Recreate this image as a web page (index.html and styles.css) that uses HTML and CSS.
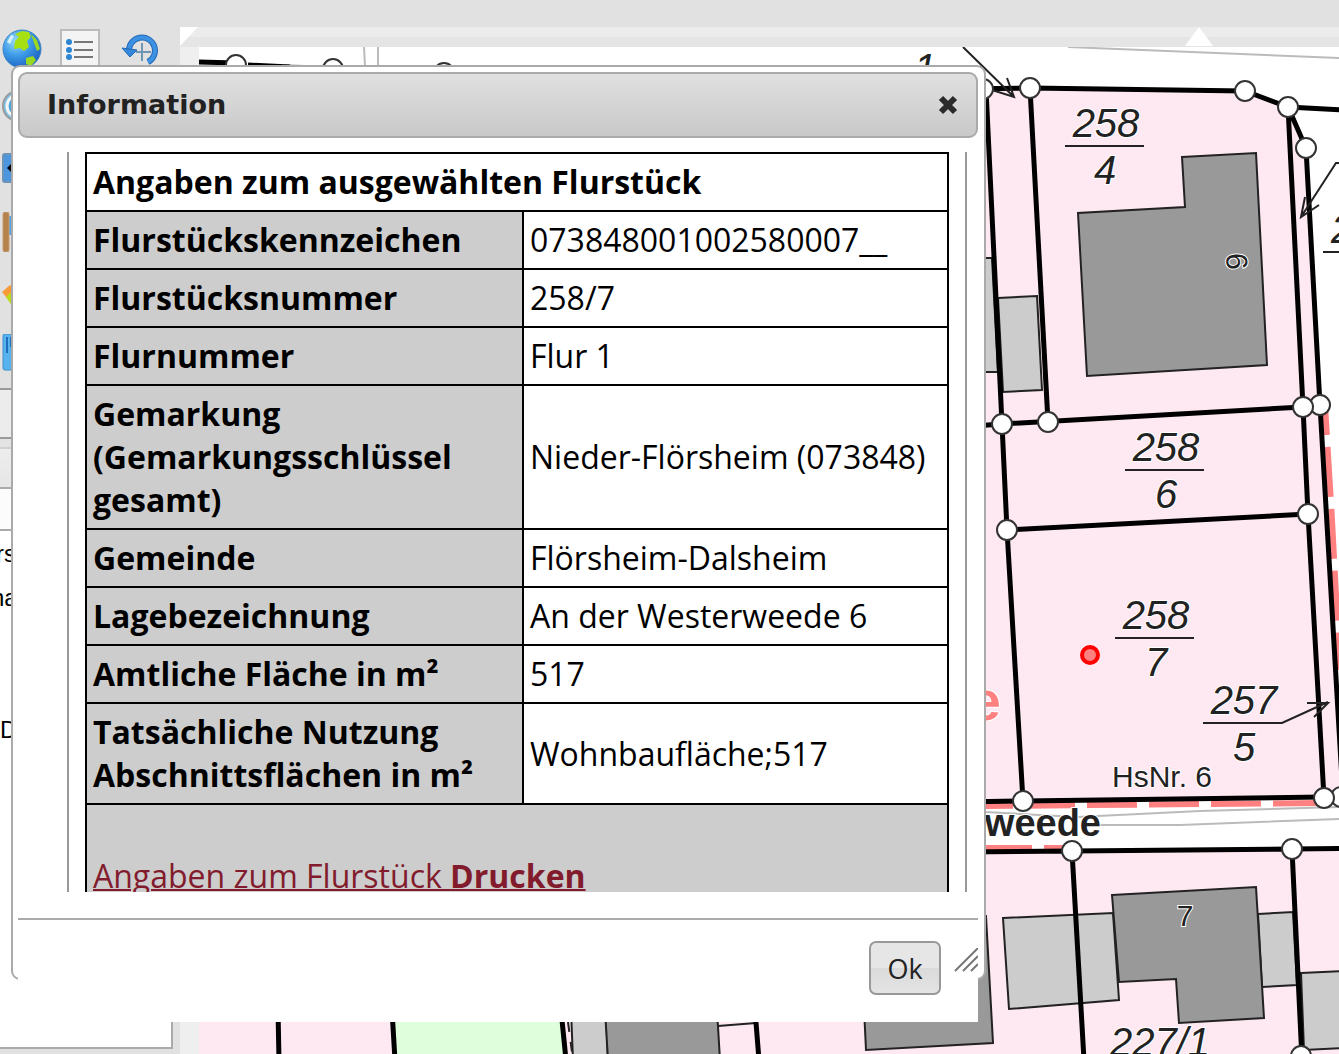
FILE: index.html
```html
<!DOCTYPE html>
<html lang="de">
<head>
<meta charset="utf-8">
<meta name="viewport" content="width=device-width, initial-scale=1">
<title>Information</title>
<link rel="stylesheet" href="styles.css">
</head>
<body>
<div class="app">
  <aside class="sidebar">
    <div class="toolbar">
      <div class="tool-row">
        <button class="tool" type="button" aria-label="Gesamtansicht">
          <svg width="40" height="40" viewBox="0 0 40 40">
            <defs><radialGradient id="sea" cx="35%" cy="30%" r="75%"><stop offset="0" stop-color="#9fdcf8"/><stop offset=".5" stop-color="#3d9be8"/><stop offset="1" stop-color="#1c5fc0"/></radialGradient></defs>
            <circle cx="20" cy="20" r="19" fill="url(#sea)" stroke="#3c86c4"/>
            <path d="M13 5 20 2 27 3 29 8 25 12 27 18 22 22 18 19 12 20 13 12 17 8Z" fill="#a6e010"/>
            <path d="M29 5 35 11 38 20 35 22 32 14ZM24 29 31 27 34 31 29 37 24 35Z" fill="#98d820"/>
            <path d="M5 13 9 6 12 7 8 15Z" fill="#d4f1fb"/>
          </svg>
        </button>
        <button class="tool framed" type="button" aria-label="Legende">
          <svg width="36" height="36" viewBox="0 0 36 36">
            <path d="M12 11H31M12 19H31M12 26H31" stroke="#777" stroke-width="2"/>
            <circle cx="7" cy="11" r="3" fill="#2d86d4"/><circle cx="7" cy="19" r="3" fill="#2d86d4"/><circle cx="7" cy="26" r="3" fill="#2d86d4"/>
          </svg>
        </button>
        <button class="tool" type="button" aria-label="Vorherige Ansicht">
          <svg width="40" height="40" viewBox="0 0 40 40">
            <path d="M11 22A13 13 0 1 1 30 33" fill="none" stroke="#2368b4" stroke-width="6"/>
            <path d="M11 22A13 13 0 1 1 30 33" fill="none" stroke="#3d92e4" stroke-width="4"/>
            <path d="M4 19 19 21 12 28Z" fill="#3488dc" stroke="#2368b4"/>
            <path d="M24 14V32M18 23H33" stroke="#6d96b4" stroke-width="2"/>
          </svg>
        </button>
      </div>
      <button class="tool" type="button" aria-label="Lupe">
        <svg width="40" height="40" viewBox="0 0 40 40"><circle cx="16" cy="16" r="15" fill="#7cc4ee" stroke="#999" stroke-width="2"/><circle cx="16" cy="16" r="11" fill="#4ea7de" stroke="#f4f4f4" stroke-width="3"/></svg>
      </button>
      <button class="tool" type="button" aria-label="Verschieben">
        <svg width="40" height="40" viewBox="0 0 40 40"><rect x="1" y="3" width="32" height="28" rx="2" fill="#4b96dc" stroke="#6d93b6" stroke-width="2"/><path d="M5 17 12 10V24Z"/></svg>
      </button>
      <button class="tool" type="button" aria-label="Markierung">
        <svg width="40" height="40" viewBox="0 0 40 40"><rect x="7" y="4" width="24" height="19" fill="#4fa4ea"/><rect x="1" y="0" width="6" height="40" rx="2" fill="#b5824c" stroke="#c59b70"/></svg>
      </button>
      <button class="tool" type="button" aria-label="Zeichnen">
        <svg width="40" height="40" viewBox="0 0 40 40"><path d="M0 19 8 12 20 24 12 34Z" fill="#f79a3a"/><path d="M4 24 8 20 16 28 11 34Z" fill="#b8dc18"/></svg>
      </button>
      <button class="tool" type="button" aria-label="Messen">
        <svg width="40" height="40" viewBox="0 0 40 40"><rect x="1" y="0" width="34" height="36" rx="2" fill="#58b2ee" stroke="#3c8ccc"/><path d="M5 3V19M9 3V13" stroke="#1d6fbc" stroke-width="2"/></svg>
      </button>
    </div>
    <div class="bar"></div>
    <div class="tabs"></div>
    <div class="panel-head"></div>
    <div class="panel">
      <p>rs</p>
      <p class="panel-item">na</p>
      <p class="panel-last">D</p>
    </div>
  </aside>
  <main class="map-area">
    <div class="ruler">
      <svg width="100%" height="20"><path d="M0 0H18L0 19ZM1005 19 1019 0 1033 19Z" fill="#fff"/></svg>
    </div>
    <svg class="map" width="100%" height="100%" role="img" aria-label="Flurkarte">
      <g transform="translate(-199 -47)">
        <g fill="#fee9f2">
          <path d="M960 90 1030 88 1245 91 1288 107 1306 148 1320 405 1343 797 1324 798 960 801Z"/>
          <path d="M199 852H960L1292 849 1600 846V1600H199Z"/>
        </g>
        <path d="M392 1010H560L566 1060H396Z" fill="#dffedb"/>

        <g class="thin">
          <path d="M1068 47 1339 58M985 812 1077 817 1200 811 1339 807M1100 825H1180L1339 819M364 47 365 66M378 47V66M285 65 325 67"/>
        </g>

        <g class="house-light">
          <path d="M970 258H992L998 372H970ZM998 298 1037 296 1042 390 1003 392ZM1003 918 1113 913 1119 1000 1009 1009ZM1258 914 1293 912 1297 985 1262 987ZM1301 973 1345 971V1048L1304 1050ZM571 1010H606L608 1060H573Z"/>
        </g>
        <g class="house">
          <path d="M1182 157 1256 153 1267 365 1087 376 1078 213 1185 207ZM1112 895 1256 887 1264 1018 1179 1023 1176 979 1119 982ZM860 925 986 916 993 1043 866 1050ZM605 1010H717L720 1060H608Z"/>
          <path d="M718 1026 756 1023" />
        </g>

        <g class="boundary">
          <path d="M985 806 1320 803" stroke-dasharray="50 12" stroke-dashoffset="22"/>
          <path d="M985 848H1066" stroke-dasharray="47 12"/>
          <path d="M1325 405 1332 520 1340 670" stroke-dasharray="50 12" stroke-dashoffset="20"/>
        </g>
        <text class="street-red" x="1001" y="720">e</text>

        <g class="parcel">
          <path d="M960 89 1030 88 1245 91 1288 107 1400 113M1288 107 1306 148 1320 405 1343 797M1288 107 1303 407 1308 514 1324 798"/>
          <path d="M986 89 1002 424 1007 530 1023 801M1030 88 1048 422M960 427 1002 424 1303 407 1320 405M1007 530 1308 514M960 802 1023 801 1324 797 1400 797"/>
          <path d="M960 852 1072 851 1292 849 1400 848M1072 851 1084 1060M1292 849 1302 1060M278 1010 279 1060M392 1010 395 1060M561 1010 566 1060M755 1010 759 1060M199 62 236 63M248 65 290 67"/>
        </g>

        <g class="street"><text x="1101" y="836">weede</text></g>

        <g class="pointer">
          <path d="M963 47 1014 97M1007 78 1014 97 992 90M1400 163H1336L1301 217M1305 197 1301 217 1319 205M1203 723H1282L1328 702M1307 703H1328L1314 717"/>
          <path d="M1065 146H1144M1125 470H1204M1115 638H1194M1323 252H1400"/>
          <path d="M568 1022 573 1060" stroke-dasharray="10 10"/>
        </g>

        <g class="nodes">
          <circle cx="983" cy="89" r="10"/><circle cx="1030" cy="88" r="10"/><circle cx="1245" cy="91" r="10"/><circle cx="1288" cy="107" r="10"/><circle cx="1306" cy="148" r="10"/>
          <circle cx="1320" cy="405" r="10"/><circle cx="1303" cy="407" r="10"/><circle cx="1002" cy="424" r="10"/><circle cx="1048" cy="422" r="10"/>
          <circle cx="1308" cy="514" r="10"/><circle cx="1007" cy="530" r="10"/><circle cx="1023" cy="801" r="10"/><circle cx="1341" cy="797" r="10"/><circle cx="1324" cy="798" r="10"/>
          <circle cx="1072" cy="851" r="10"/><circle cx="1292" cy="849" r="10"/><circle cx="1301" cy="1056" r="10"/>
          <circle cx="236" cy="65" r="10"/><circle cx="333" cy="69" r="10"/><circle cx="444" cy="73" r="10"/>
        </g>

        <g class="number">
          <text x="1106" y="137">258</text><text x="1105" y="184">4</text>
          <text x="1166" y="461">258</text><text x="1166" y="508">6</text>
          <text x="1156" y="629">258</text><text x="1156" y="676">7</text>
          <text x="1244" y="714">257</text><text x="1244" y="761">5</text>
          <text x="1160" y="1056">227/1</text><text x="925" y="82">1</text><text x="1342" y="243">2</text>
        </g>
        <g class="house-no">
          <text x="1162" y="787">HsNr. 6</text><text x="1185" y="926">7</text>
          <text transform="translate(1247 261) rotate(-93)">9</text>
        </g>
        <circle cx="1090" cy="655" r="8" fill="#ff8080" stroke="#f00" stroke-width="4"/>
      </g>
    </svg>
  </main>
</div>

<section class="dialog" role="dialog" aria-labelledby="dialog-title">
  <header class="titlebar">
    <h1 id="dialog-title">Information</h1>
    <button class="close" type="button" aria-label="Schließen">
      <svg width="22" height="22" viewBox="0 0 22 22"><path d="M4 4 18 18M18 4 4 18" stroke="#2b2b2b" stroke-width="6"/></svg>
    </button>
  </header>
  <div class="content">
    <table>
      <colgroup><col class="col-label"><col></colgroup>
      <thead><tr><th class="caption" colspan="2" scope="colgroup">Angaben zum ausgewählten Flurstück</th></tr></thead>
      <tbody>
        <tr><th scope="row">Flurstückskennzeichen</th><td>073848001002580007__</td></tr>
        <tr><th scope="row">Flurstücksnummer</th><td>258/7</td></tr>
        <tr><th scope="row">Flurnummer</th><td>Flur 1</td></tr>
        <tr><th scope="row">Gemarkung (Gemarkungsschlüssel gesamt)</th><td>Nieder-Flörsheim (073848)</td></tr>
        <tr><th scope="row">Gemeinde</th><td>Flörsheim-Dalsheim</td></tr>
        <tr><th scope="row">Lagebezeichnung</th><td>An der Westerweede 6</td></tr>
        <tr><th scope="row">Amtliche Fläche in m²</th><td>517</td></tr>
        <tr><th scope="row">Tatsächliche Nutzung Abschnittsflächen in m²</th><td>Wohnbaufläche;517</td></tr>
        <tr><td class="print" colspan="2"><a href="#drucken">Angaben zum Flurstück <b>Drucken</b></a></td></tr>
      </tbody>
    </table>
  </div>
  <footer class="buttons">
    <button class="ok" type="button">Ok</button>
  </footer>
  <svg class="grip" width="24" height="24" viewBox="0 0 24 24"><path d="M1 23 24 0M9 23 24 8M17 23 24 16" stroke="#777" stroke-width="2"/></svg>
</section>
</body>
</html>
```
FILE: styles.css
```css
* {
  box-sizing: border-box;
}

body {
  margin: 0;
  height: 100vh;
  overflow: hidden;
  background: #e1e1e1;
  font-family: "Open Sans", sans-serif;
}

button {
  margin: 0;
  padding: 0;
  border: 0;
  background: none;
  font: inherit;
}

button svg {
  display: block;
}

.app {
  display: flex;
  height: 100%;
  padding-top: 27px;
}

/* Sidebar */
.sidebar {
  display: flex;
  flex: 0 0 180px;
  flex-direction: column;
  padding-right: 7px;
}

.toolbar {
  display: flex;
  flex-direction: column;
  align-items: flex-start;
  gap: 21px;
  height: 361px;
  padding: 2px;
}

.tool-row {
  display: flex;
  gap: 18px;
}

.tool {
  flex: none;
  width: 40px;
  height: 40px;
}

.framed {
  border: 2px solid #bbb;
  background: #f4f4f4;
}

.bar {
  height: 51px;
  border: solid #999;
  border-width: 2px 0;
  background: #ececec;
}

.tabs {
  height: 50px;
  border-bottom: 2px solid #aaa;
  background: linear-gradient(#e3e3e3 8px, #d0d0d0 8px, #d0d0d0 10px, #ededed 10px, #e6e6e6);
}

.panel-head {
  height: 42px;
  border: solid #aaa;
  border-width: 0 2px 2px 0;
  background: #fcfcfc;
}

.panel {
  flex: 1;
  margin-bottom: 5px;
  padding-top: 1px;
  border: solid #aaa;
  border-width: 0 2px 2px 0;
  background: #fff;
  font-family: "Liberation Sans", sans-serif;
  font-size: 24px;
  line-height: 44px;
  text-indent: -4px;
}

.panel p {
  margin: 0;
}

.panel .panel-item {
  text-indent: -9px;
}

.panel .panel-last {
  margin-top: 88px;
  text-indent: 0;
}

/* Map */
.map-area {
  display: flex;
  flex: 1;
  flex-direction: column;
  min-width: 0;
  background: #efefef;
}

.ruler {
  flex: none;
  height: 20px;
  background: linear-gradient(#ececec 50%, #e5e5e5 50%);
}

.ruler svg {
  display: block;
}

.map {
  flex: 1;
  width: auto;
  min-height: 0;
  margin-left: 19px;
  background: #fff;
  font-family: "Liberation Sans", sans-serif;
}

.thin {
  fill: none;
  stroke: #bbb;
  stroke-width: 2;
}

.house-light {
  fill: #ccc;
  stroke: #222;
  stroke-width: 2;
}

.house {
  fill: #999;
  stroke: #222;
  stroke-width: 2;
}

.boundary {
  fill: none;
  stroke: #ff8080;
  stroke-width: 6;
}

.parcel {
  fill: none;
  stroke: #000;
  stroke-width: 5;
}

.pointer {
  fill: none;
  stroke: #222;
  stroke-width: 2;
}

.nodes {
  fill: #fff;
  stroke: #333;
  stroke-width: 2;
}

.map text {
  fill: #222;
  stroke: #fff;
  stroke-width: 2;
  paint-order: stroke;
  text-anchor: middle;
}

.number {
  font-size: 40px;
  font-style: italic;
}

.house-no {
  font-size: 30px;
}

.street {
  font-size: 38px;
  font-weight: bold;
}

.map .street text {
  text-anchor: end;
}

.map .street-red {
  fill: #ff8080;
  font-size: 56px;
  font-weight: bold;
  text-anchor: end;
}

/* Dialog */
.dialog {
  position: absolute;
  top: 65px;
  left: 11px;
  width: 975px;
  padding: 5px 6px 5px 5px;
  border: 2px solid #aaa;
  border-radius: 9px;
  background: #fff;
}

.titlebar {
  display: flex;
  align-items: center;
  justify-content: space-between;
  height: 66px;
  padding: 0 17px 0 27px;
  border: 2px solid #aaa;
  border-radius: 9px;
  background: linear-gradient(#e0e0e0, #c9c9c9);
}

.titlebar h1 {
  margin: 0;
  color: #222;
  font-family: Verdana, "DejaVu Sans", sans-serif;
  font-size: 27px;
  line-height: 36px;
}

.content {
  height: 740px;
  margin: 14px 11px 26px 49px;
  padding: 0 16px;
  overflow: hidden;
  border: solid #999;
  border-width: 0 2px;
}

table {
  width: 100%;
  border-collapse: collapse;
  table-layout: fixed;
  font-size: 32px;
  line-height: 43px;
}

.col-label {
  width: 437px;
}

th,
td {
  padding: 6px 6px 7px;
  border: 2px solid #000;
  text-align: left;
  vertical-align: middle;
}

th,
.print {
  background: #cdcdcd;
}

.caption {
  background: #fff;
}

.print {
  height: 160px;
  padding-top: 49px;
  vertical-align: top;
}

.print a {
  color: #821c2d;
  text-decoration-thickness: 2px;
}

.buttons {
  display: flex;
  justify-content: flex-end;
  margin-bottom: -49px;
  padding: 21px 37px 27px 0;
  border-top: 2px solid #aaa;
  background: #fff;
}

.ok {
  width: 72px;
  height: 54px;
  border: 2px solid #999;
  border-radius: 7px;
  background: linear-gradient(#e6e6e6 50%, #dadada 50%, #e4e4e4);
  color: #222;
  font-size: 27px;
}

.grip {
  position: absolute;
  right: 6px;
  bottom: 6px;
}
```
